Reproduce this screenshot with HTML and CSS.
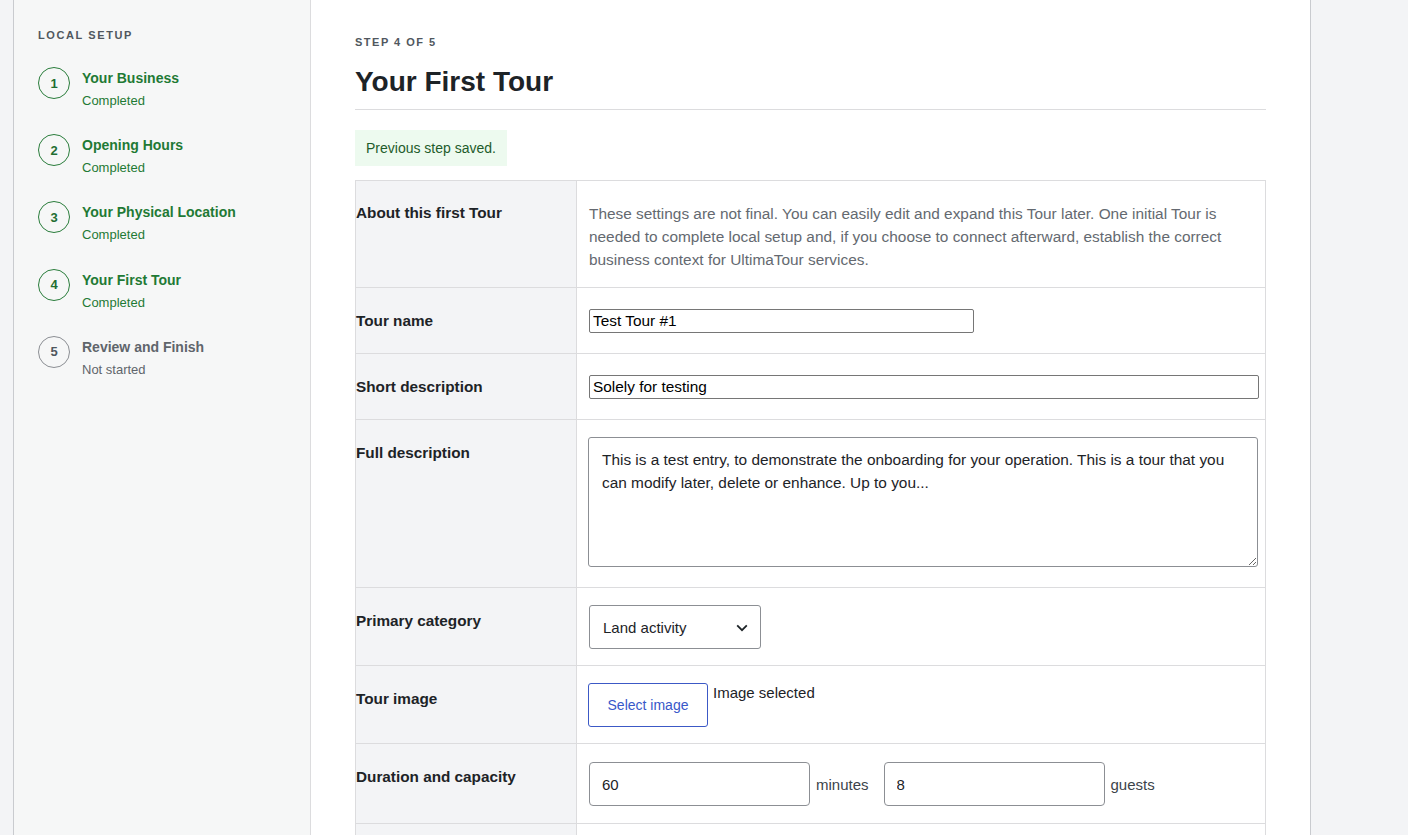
FILE: index.html
```html
<!DOCTYPE html>
<html lang="en">
<head>
<meta charset="utf-8">
<title>Your First Tour</title>
<link rel="stylesheet" href="styles.css">
</head>
<body>
<div class="frame">
  <aside class="sidebar">
    <div class="side-heading">LOCAL SETUP</div>
    <ol class="steps">
      <li class="step done"><span class="num">1</span><div class="txt"><div class="st-title">Your Business</div><div class="st-sub">Completed</div></div></li>
      <li class="step done"><span class="num">2</span><div class="txt"><div class="st-title">Opening Hours</div><div class="st-sub">Completed</div></div></li>
      <li class="step done"><span class="num">3</span><div class="txt"><div class="st-title">Your Physical Location</div><div class="st-sub">Completed</div></div></li>
      <li class="step done"><span class="num">4</span><div class="txt"><div class="st-title">Your First Tour</div><div class="st-sub">Completed</div></div></li>
      <li class="step todo"><span class="num">5</span><div class="txt"><div class="st-title">Review and Finish</div><div class="st-sub">Not started</div></div></li>
    </ol>
  </aside>
  <main class="main">
    <div class="step-label">STEP 4 OF 5</div>
    <h1 class="title">Your First Tour</h1>
    <div class="notice">Previous step saved.</div>
    <table class="form-table">
      <colgroup><col class="col-label"><col></colgroup>
      <tr>
        <th class="first-th">About this first Tour</th>
        <td><p class="desc">These settings are not final. You can easily edit and expand this Tour later. One initial Tour is needed to complete local setup and, if you choose to connect afterward, establish the correct business context for UltimaTour services.</p></td>
      </tr>
      <tr>
        <th>Tour name</th>
        <td><input class="small-input name" type="text" value="Test Tour #1"></td>
      </tr>
      <tr>
        <th>Short description</th>
        <td><input class="small-input wide" type="text" value="Solely for testing"></td>
      </tr>
      <tr>
        <th>Full description</th>
        <td><textarea class="area">This is a test entry, to demonstrate the onboarding for your operation. This is a tour that you can modify later, delete or enhance. Up to you...</textarea></td>
      </tr>
      <tr>
        <th>Primary category</th>
        <td>
          <span class="select-wrap">
            <select class="select"><option>Land activity</option><option>Water activity</option></select>
            <svg class="chev" width="12" height="8" viewBox="0 0 12 8"><path d="M1.2 1.4 6 6.2l4.8-4.8" fill="none" stroke="#1d2327" stroke-width="1.8"/></svg>
          </span>
        </td>
      </tr>
      <tr>
        <th>Tour image</th>
        <td><div class="img-row"><button class="btn" type="button">Select image</button><span class="img-status">Image selected</span></div></td>
      </tr>
      <tr>
        <th>Duration and capacity</th>
        <td><div class="dur-row"><input class="big-input" type="text" value="60"><span class="unit first">minutes</span><input class="big-input" type="text" value="8"><span class="unit">guests</span></div></td>
      </tr>
      <tr class="spacer-row">
        <th></th>
        <td></td>
      </tr>
    </table>
  </main>
</div>
</body>
</html>
```
FILE: styles.css
```css
html, body {
  margin: 0;
  padding: 0;
}
body {
  background: #f3f4f6;
  font-family: "Liberation Sans", Arial, sans-serif;
  color: #1d2327;
  height: 835px;
  overflow: hidden;
}
.frame {
  display: flex;
  margin-left: 13px;
  width: 1296px;
  min-height: 835px;
  border-left: 1px solid #c9cbcf;
  border-right: 1px solid #c9cbcf;
}
.sidebar {
  width: 272px;
  flex: none;
  background: #f6f7f7;
  border-right: 1px solid #dcdcde;
  padding: 28px 0 0 24px;
}
.side-heading {
  font-size: 11px;
  line-height: 14px;
  font-weight: 700;
  letter-spacing: 1.6px;
  color: #50575e;
}
.steps {
  list-style: none;
  margin: 25px 0 0;
  padding: 0;
  display: flex;
  flex-direction: column;
  gap: 25.2px;
}
.step {
  display: flex;
  gap: 12px;
  align-items: flex-start;
}
.num {
  box-sizing: border-box;
  width: 32px;
  height: 32px;
  border-radius: 50%;
  border: 1px solid #2a7d3c;
  display: flex;
  align-items: center;
  justify-content: center;
  font-size: 13px;
  font-weight: 700;
  color: #1f6e33;
  flex: none;
}
.txt {
  padding-top: 2px;
}
.st-title {
  font-size: 14px;
  line-height: 18px;
  font-weight: 700;
  color: #1f7a35;
}
.st-sub {
  font-size: 13px;
  line-height: 16px;
  margin-top: 6px;
  color: #1f7a35;
}
.todo .num {
  border-color: #8c8f94;
  color: #50575e;
}
.todo .st-title {
  color: #5f656b;
}
.todo .st-sub {
  color: #5f656b;
}
.main {
  flex: 1;
  background: #fff;
  padding: 35px 44px 0 44px;
}
.step-label {
  font-size: 11px;
  line-height: 14px;
  font-weight: 700;
  letter-spacing: 1.5px;
  color: #50575e;
}
.title {
  margin: 16px 0 0;
  font-size: 28px;
  line-height: 34px;
  font-weight: 700;
  color: #1d2327;
  padding-bottom: 10px;
  border-bottom: 1px solid #dcdcde;
}
.notice {
  display: inline-block;
  margin-top: 20px;
  background: #edfaef;
  color: #1e5c2b;
  font-size: 14px;
  line-height: 18px;
  padding: 9px 11px;
}
.form-table {
  margin-top: 14px;
  width: 100%;
  table-layout: fixed;
  border-collapse: collapse;
  border: 1px solid #dcdcde;
}
.col-label {
  width: 221px;
}
.form-table tr {
  border-bottom: 1px solid #dcdcde;
}
.form-table th {
  background: #f3f4f6;
  border-right: 1px solid #dcdcde;
  text-align: left;
  vertical-align: top;
  font-size: 15.3px;
  line-height: 20px;
  font-weight: 700;
  color: #1d2327;
  padding: 23px 10px 21px 0;
}
.form-table th.first-th {
  padding-top: 22px;
}
.form-table td {
  vertical-align: top;
  padding: 17px 7px 16px 12px;
  font-size: 14px;
}
.spacer-row th,
.spacer-row td {
  height: 60px;
}
.desc {
  margin: 4px 0 0;
  color: #646970;
  font-size: 15.4px;
  line-height: 23px;
}
.small-input {
  display: block;
  box-sizing: border-box;
  height: 24px;
  margin: 4px 0;
  border: 1px solid #767676;
  border-radius: 2px;
  padding: 1px 3px;
  font-family: "Liberation Sans", Arial, sans-serif;
  font-size: 15.4px;
  color: #000;
}
.small-input.name {
  width: 385px;
}
.small-input.wide {
  width: 670px;
}
.area {
  display: block;
  box-sizing: border-box;
  width: 670px;
  height: 130px;
  margin: 0 0 4px -1px;
  border: 1px solid #8c8f94;
  border-radius: 3px;
  padding: 10px 13px;
  font-family: "Liberation Sans", Arial, sans-serif;
  font-size: 15.4px;
  line-height: 23px;
  color: #1d2327;
  resize: vertical;
}
.select-wrap {
  position: relative;
  display: inline-block;
  vertical-align: top;
}
.select {
  display: block;
  appearance: none;
  -webkit-appearance: none;
  box-sizing: border-box;
  width: 172px;
  height: 44px;
  border: 1px solid #8c8f94;
  border-radius: 3px;
  background: #fff;
  padding: 0 13px;
  font-family: "Liberation Sans", Arial, sans-serif;
  font-size: 15px;
  color: #1d2327;
}
.chev {
  position: absolute;
  right: 13px;
  top: 19px;
  pointer-events: none;
}
.img-row {
  display: flex;
  align-items: flex-start;
  gap: 5px;
  margin-left: -1px;
}
.btn {
  box-sizing: border-box;
  width: 120px;
  height: 44px;
  border: 1px solid #3c59c6;
  border-radius: 3px;
  background: #fff;
  color: #3858c9;
  font-family: "Liberation Sans", Arial, sans-serif;
  font-size: 14px;
  padding: 0;
}
.img-status {
  font-size: 15px;
  line-height: 18px;
  color: #1d2327;
  padding-top: 1px;
}
.dur-row {
  display: flex;
  align-items: center;
}
.big-input {
  box-sizing: border-box;
  width: 221px;
  height: 44px;
  border: 1px solid #8c8f94;
  border-radius: 4px;
  padding: 0 12px;
  font-family: "Liberation Sans", Arial, sans-serif;
  font-size: 15px;
  color: #1d2327;
  margin: 1px 0;
}
.unit {
  font-size: 15px;
  color: #3c434a;
  margin-left: 6px;
}
.unit.first {
  margin-right: 15px;
}
```
